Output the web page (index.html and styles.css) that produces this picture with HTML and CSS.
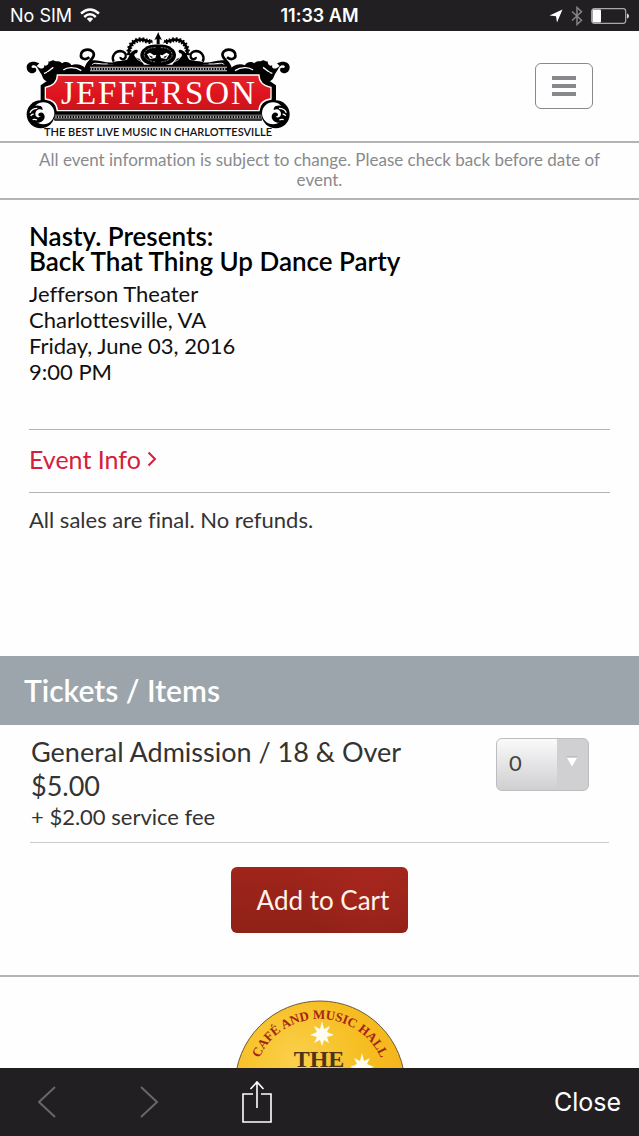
FILE: index.html
```html
<!DOCTYPE html>
<html lang="en">
<head>
    <meta charset="UTF-8">
    <meta name="viewport" content="width=device-width, initial-scale=1.0">
    <title>Back That Thing Up Dance Party</title>
    <link rel="stylesheet" href="styles.css">
</head>
<body>
    <div class="status-bar">
        <div class="status-left">
            <span>No SIM</span>
            <svg width="20" height="15" viewBox="0 0 20 15" fill="none" stroke="#fff" stroke-width="2.4">
                <path d="M1 5.5Q10 -2.6 19 5.5"/>
                <path d="M4.2 9Q10 3.6 15.8 9"/>
                <path d="M6.8 10.8Q10 8 13.2 10.8L10 14.2Z" fill="#fff" stroke="none"/>
            </svg>
        </div>
        <div class="status-time">11:33 AM</div>
        <div class="status-right">
            <svg width="14" height="14" viewBox="0 0 14 14"><path d="M13.5 .5L8 13.5L7 7.2L.5 6.4Z" fill="#fff"/></svg>
            <svg width="12" height="20" viewBox="0 0 12 20" fill="none" stroke="#858487" stroke-width="1.5"><path d="M1 5.5L10.5 14.3L6 18.5V1.5L10.5 5.7L1 14.5"/></svg>
            <svg width="38" height="16" viewBox="0 0 38 16">
                <rect x=".7" y=".7" width="34" height="14.6" rx="2.5" fill="none" stroke="#aaa9ab" stroke-width="1.2"/>
                <rect x="1.5" y="1.5" width="8.5" height="13" rx="1" fill="#fff"/>
                <path d="M36 5.5Q38 6 38 8T36 10.5Z" fill="#ddd"/>
            </svg>
        </div>
    </div>

    <main class="page">
        <header class="site-header">
            <a href="#" class="logo" aria-label="Jefferson">
                <svg width="266" height="110" viewBox="25 31 266 110">
                    <defs>
                        <linearGradient id="plaque" x1="0" y1="0" x2="0" y2="1">
                            <stop offset="0" stop-color="#e0262b"/>
                            <stop offset=".5" stop-color="#e0141f"/>
                            <stop offset="1" stop-color="#c9141b"/>
                        </linearGradient>
                        <g id="ornament">
                            <!-- leaf and curl on the shoulder -->
                            <path d="M118 190C100 180 80 186 80 202C80 218 96 225 106 216C112 210 108 200 100 204C94 205 92 198 99 196C112 193 115 212 124 222C128 232 130 240 142 245L158 240L168 218L262 216C256 196 232 188 214 196C212 188 196 182 186 190C180 180 168 186 163 182C156 178 150 188 145 184C148 194 138 200 132 196C135 204 128 208 118 204L110 198Z" fill="#000"/>
                            <path d="M190 210C202 200 226 200 244 212M132 220C145 218 150 208 160 202" fill="none" stroke="#fff" stroke-width="4"/>
                            <!-- scroll beside the crest -->
                            <path d="M268 172C254 184 241 173 243 164C245 149 267 144 278 155C288 166 275 177 266 188C258 198 256 207 257 216" fill="none" stroke="#000" stroke-width="8"/>
                            <path d="M275 181C304 177 320 194 346 185L382 180V194H288C282 199 264 210 257 216C259 200 266 185 275 181Z" fill="#000"/>
                            <path d="M273 199Q278 188 291 190Q309 193 323 192" fill="none" stroke="#fff" stroke-width="3"/>
                            <path d="M341 185C333 170 345 153 361 153C372 154 380 161 377 171C373 181 360 179 362 171" fill="none" stroke="#000" stroke-width="7"/>
                            <!-- feathered arch -->
                            <path d="M387 165C384 138 400 120 423 119C434 118 442 127 457 124" fill="none" stroke="#000" stroke-width="8"/>
                            <path d="M387 165C384 138 400 120 423 119C434 118 442 127 457 124" fill="none" stroke="#000" stroke-width="15" stroke-dasharray="5 5"/>
                            <path d="M340 196V186L372 182C390 180 382 163 400 152C413 145 417 153 410 160C400 158 400 174 418 176L431 192V197Z" fill="#000"/>
                            <path d="M404 166Q410 181 426 186" fill="none" stroke="#fff" stroke-width="2"/>
                            <path d="M475 134C445 131 421 147 421 165C421 184 439 197 475 197Z" fill="#000"/>
                            <path d="M467 143C441 142 431 155 433 169Q441 183 467 186" fill="none" stroke="#bbb" stroke-width="2" stroke-dasharray="6 3"/>
                            <path d="M441 163L450 158L462 166L469 164L466 174L450 177Z" fill="#fff"/>
                            <path d="M446 166L459 171L454 174Z" fill="#000"/>
                            <path d="M475 96L469 109L463 120L470 117V133H475Z" fill="#000"/>
                        </g>
                        <g id="foot">
                            <circle cx="122" cy="343" r="42" fill="#000"/>
                            <circle cx="130" cy="340" r="33" fill="#fff"/>
                            <path d="M122 318C104 312 84 322 84 342C86 358 98 368 112 368C124 368 134 360 134 350C134 340 124 334 117 340C112 345 117 351 122 349C118 356 106 352 106 342C106 330 118 324 128 330C128 324 126 320 122 318Z" fill="#000"/>
                            <path d="M90 338C94 328 102 325 112 325M92 348C95 343 98 342 101 343M98 359C103 357 107 358 111 360" fill="none" stroke="#fff" stroke-width="4"/>
                        </g>
                    </defs>
                    <g transform="scale(.333333)">
                        <use href="#ornament"/>
                        <use href="#ornament" transform="translate(949 0) scale(-1 1)"/>
                        <path d="M271 194H678L692 216H808V242L828 256V302L802 330L785 362H164L147 330L122 302V256L142 242V216H257Z" fill="#000"/>
                        <path d="M270 207H681" stroke="#ccc" stroke-width="13"/>
                        <path d="M270 207H681" stroke="#000" stroke-width="8"/>
                        <path d="M272 207H680" stroke="#aaa" stroke-width="6" stroke-dasharray="4 4"/>
                        <path d="M163 351H787" stroke="#bbb" stroke-width="14"/>
                        <path d="M163 351H787" stroke="#000" stroke-width="9"/>
                        <path d="M166 351H785" stroke="#aaa" stroke-width="6" stroke-dasharray="4 4"/>
                        <path d="M172 225H777C777 246 792 258 813 262V297C790 300 778 312 777 332H172C171 312 159 300 136 297V262C157 258 172 246 172 225Z" fill="url(#plaque)" stroke="#fff" stroke-width="4"/>
                        <use href="#foot"/>
                        <use href="#foot" transform="translate(949 0) scale(-1 1)"/>
                    </g>
                    <text class="logo-name" x="159" y="104" text-anchor="middle">JEFFERSON</text>
                    <text class="logo-tagline" x="158" y="136" text-anchor="middle">THE BEST LIVE MUSIC IN CHARLOTTESVILLE</text>
                </svg>
            </a>
            <button class="menu-btn" aria-label="Menu">
                <span></span>
                <span></span>
                <span></span>
            </button>
        </header>

        <p class="notice">All event information is subject to change. Please check back before date of event.</p>

        <section class="event">
            <h1>Nasty. Presents:<br>Back That Thing Up Dance Party</h1>
            <p class="details">Jefferson Theater<br>Charlottesville, VA<br>Friday, June 03, 2016<br>9:00 PM</p>
            <a href="#" class="event-info">Event Info
                <svg width="10" height="16" viewBox="0 0 10 16" fill="none" stroke="#d5203c" stroke-width="2"><path d="M1.5 1.5L8 8L1.5 14.5"/></svg>
            </a>
            <p class="policy">All sales are final. No refunds.</p>
        </section>

        <section class="tickets">
            <h2>Tickets / Items</h2>
            <div class="ticket">
                <div class="ticket-text">
                    <label for="quantity">General Admission / 18 &amp; Over</label>
                    <div class="price">$5.00</div>
                    <div class="fee">+ $2.00 service fee</div>
                </div>
                <div class="quantity">
                    <select id="quantity">
                        <option>0</option>
                        <option>1</option>
                        <option>2</option>
                        <option>3</option>
                        <option>4</option>
                    </select>
                    <svg class="arrow" width="12" height="11" viewBox="0 0 12 11"><path d="M.5 1H11.5L6 10.5Z" fill="#fff"/><path d="M.5 1H11.5" stroke="#aaa"/></svg>
                </div>
            </div>
            <button class="cart-btn">Add to Cart</button>
        </section>

        <footer class="venue">
            <svg width="172" height="172" viewBox="0 0 172 172">
                <defs>
                    <radialGradient id="gold" cx=".35" cy=".35" r=".7">
                        <stop offset="0" stop-color="#fbd04b"/>
                        <stop offset=".6" stop-color="#f6bd20"/>
                        <stop offset="1" stop-color="#f4b31c"/>
                    </radialGradient>
                    <path id="rim" d="M19 86A67 67 0 0 1 153 86"/>
                    <path id="star" d="M0 -13L2 -5L8 -8L5 -2L12 1L5 3L7 9L2 6L0 12L-2 6L-8 9L-5 3L-12 1L-5 -2L-8 -8L-2 -5Z" fill="#fffdf2"/>
                </defs>
                <circle cx="86" cy="86" r="85" fill="url(#gold)" stroke="#6d5c38"/>
                <text class="venue-rim"><textPath href="#rim" startOffset="50%" text-anchor="middle">CAFÉ AND MUSIC HALL</textPath></text>
                <use href="#star" x="88" y="34"/>
                <use href="#star" x="128" y="66"/>
                <text class="venue-name" x="85" y="67" text-anchor="middle">THE</text>
            </svg>
        </footer>
    </main>

    <nav class="toolbar">
        <button aria-label="Back"><svg width="20" height="34" viewBox="0 0 20 34" fill="none" stroke="#68676a" stroke-width="2"><path d="M18 2L2 17L18 32"/></svg></button>
        <button aria-label="Forward"><svg width="20" height="34" viewBox="0 0 20 34" fill="none" stroke="#68676a" stroke-width="2"><path d="M2 2L18 17L2 32"/></svg></button>
        <button aria-label="Share"><svg width="32" height="44" viewBox="0 0 32 44" fill="none" stroke="#fff" stroke-width="1.6"><path d="M12 14H2V42H30V14H20M16 28V2M9.5 9L16 2L22.5 9"/></svg></button>
        <button class="close">Close</button>
    </nav>
</body>
</html>
```
FILE: styles.css
```css
* {
    box-sizing: border-box;
}

body {
    margin: 0;
    height: 100vh;
    display: flex;
    flex-direction: column;
    background-color: #fefefe;
    color: #333;
    font-family: Lato, sans-serif;
    font-variant-ligatures: none;
}

h1, h2, p {
    margin: 0;
}

button {
    padding: 0;
    border: none;
    background: none;
    font-family: inherit;
    cursor: pointer;
}

svg {
    display: block;
}

.status-bar {
    flex: none;
    height: 31px;
    padding: 0 10px;
    display: grid;
    grid-template-columns: 1fr auto 1fr;
    align-items: center;
    background-color: #211f22;
    color: #fff;
    font-family: Inter, sans-serif;
    font-size: 18px;
}

.status-left, .status-right {
    display: flex;
    align-items: center;
    gap: 8px;
}

.status-right {
    justify-content: flex-end;
}

.status-time {
    font-weight: 600;
}

.page {
    flex: 1;
    min-height: 0;
    overflow-y: auto;
    scrollbar-width: none;
}

.site-header {
    display: flex;
    justify-content: space-between;
    align-items: center;
    padding: 0 46px 0 25px;
    border-bottom: 2px solid #b3b3b5;
}

.logo-name {
    font-family: "Liberation Serif", serif;
    font-size: 33px;
    letter-spacing: 2px;
    fill: #fff;
}

.logo-tagline {
    font-size: 11px;
    font-weight: 600;
    fill: #111;
}

.menu-btn {
    width: 58px;
    height: 46px;
    display: flex;
    flex-direction: column;
    align-items: center;
    justify-content: center;
    gap: 4px;
    border: 1px solid #88898c;
    border-radius: 6px;
}

.menu-btn span {
    width: 24px;
    height: 4px;
    background-color: #88898c;
}

.notice {
    padding: 7px 30px 8px;
    border-bottom: 2px solid #b3b3b5;
    color: #898a8c;
    font-size: 17px;
    line-height: 20px;
    text-align: center;
}

.event {
    padding: 24px 29px 0;
}

h1 {
    color: #000;
    font-size: 26px;
    font-weight: 600;
    line-height: 25px;
}

.details {
    margin-top: 7px;
    color: #111;
    font-size: 22px;
    line-height: 26px;
}

.event-info {
    display: flex;
    align-items: center;
    gap: 6px;
    height: 64px;
    margin-top: 44px;
    padding-bottom: 4px;
    border-top: 1px solid #b3b3b5;
    border-bottom: 1px solid #b3b3b5;
    color: #d5203c;
    font-size: 25px;
    text-decoration: none;
}

.policy {
    margin-top: 14px;
    font-size: 22px;
    line-height: 26px;
}

.tickets {
    margin-top: 123px;
    padding-bottom: 42px;
    border-bottom: 2px solid #b3b3b5;
}

h2 {
    padding: 0 24px;
    background-color: #9ca5ab;
    color: #fff;
    font-size: 30px;
    font-weight: 600;
    line-height: 69px;
}

.ticket {
    display: flex;
    justify-content: space-between;
    align-items: flex-start;
    margin: 0 30px;
    padding: 10px 20px 11px 1px;
    border-bottom: 1px solid #ccc;
}

.ticket label, .price {
    display: block;
    font-size: 27px;
    line-height: 34px;
}

.fee {
    font-size: 22px;
    line-height: 28px;
}

.quantity {
    position: relative;
    margin-top: 3px;
}

.quantity select {
    appearance: none;
    width: 93px;
    height: 53px;
    padding: 0 12px 4px;
    border: 1px solid #bdbcbe;
    border-radius: 6px;
    background: linear-gradient(to right, transparent 60px, #d0cfd1 60px), linear-gradient(#fbfafb, #cfced0);
    color: #444;
    font-family: inherit;
    font-size: 22px;
}

.arrow {
    position: absolute;
    top: 18px;
    right: 11px;
    pointer-events: none;
}

.cart-btn {
    display: block;
    margin: 24px auto 0;
    height: 66px;
    padding: 0 19px 0 26px;
    border-radius: 6px;
    background: radial-gradient(circle at 80% 10%, #a5261d, transparent 50%), linear-gradient(#a0251b, #8f2118);
    color: #fff2e8;
    font-size: 26px;
}

.venue {
    display: flex;
    justify-content: center;
    padding: 23px 0 40px;
}

.venue-rim {
    font-family: "Liberation Serif", serif;
    font-size: 13px;
    font-weight: 700;
    fill: #a52418;
}

.venue-name {
    font-family: "Liberation Serif", serif;
    font-size: 24px;
    font-weight: 700;
    fill: #4d3515;
}

.toolbar {
    flex: none;
    height: 68px;
    padding: 0 18px 0 37px;
    display: flex;
    align-items: center;
    gap: 82px;
    background-color: #211f22;
}

.close {
    margin-left: auto;
    color: #fff;
    font-family: Inter, sans-serif;
    font-size: 25px;
}
```
